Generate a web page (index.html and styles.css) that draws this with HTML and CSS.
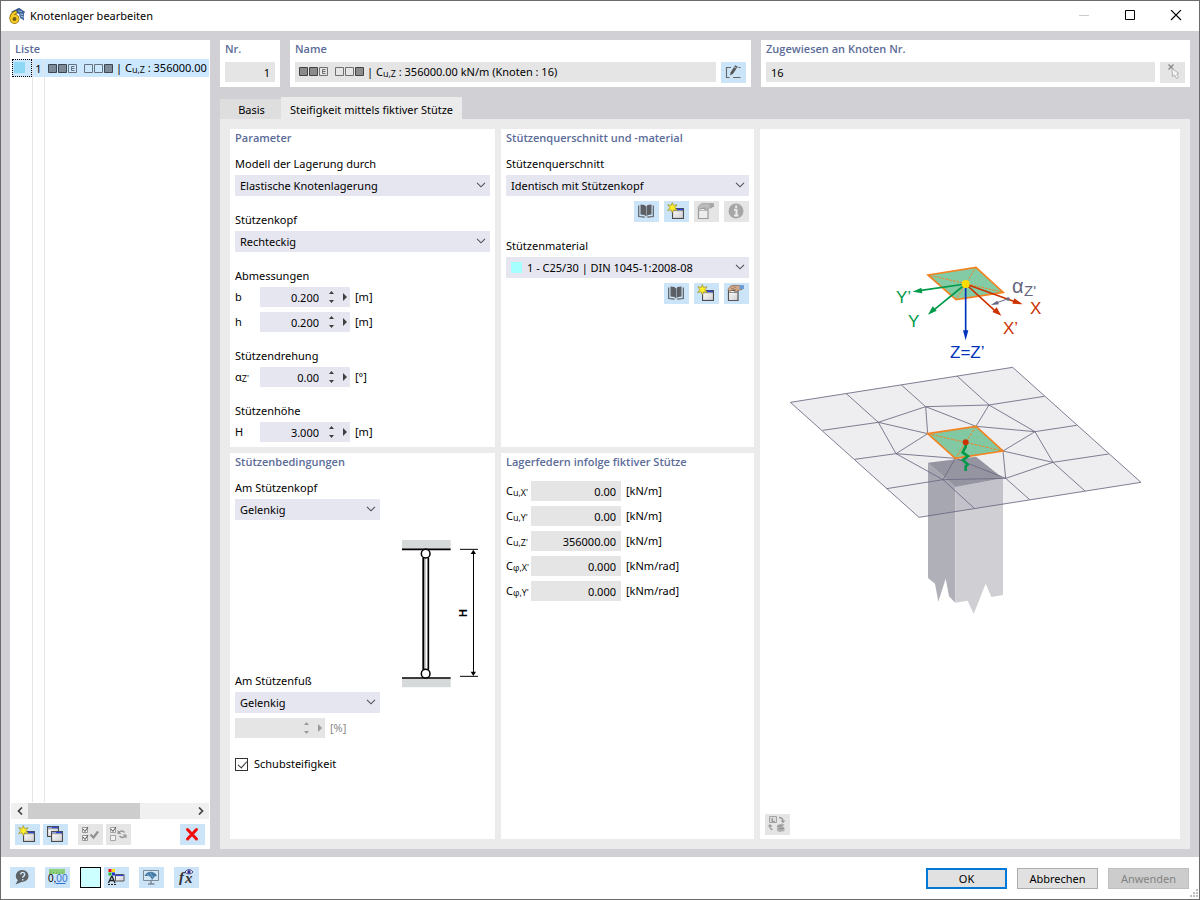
FILE: index.html
```html
<!DOCTYPE html>
<html lang="de">
<head>
<meta charset="utf-8">
<title>Knotenlager bearbeiten</title>
<link rel="stylesheet" href="styles.css">
</head>
<body>
<svg class="defs" aria-hidden="true">
  <defs>
    <linearGradient id="g-win" x1="0" y1="0" x2="1" y2="1"><stop offset="0" stop-color="#fff"/><stop offset="1" stop-color="#cfcfd4"/></linearGradient>
    <symbol id="i-window" viewBox="0 0 12 11">
      <rect x=".5" y=".5" width="11" height="10" fill="url(#g-win)" stroke="#4c4c4c" stroke-width="1.200"/>
      <path d="M1 1.500h4" stroke="#8aa0e8"/><path d="M5 1.500h6" stroke="#2a45e0" stroke-width="1.400"/><path d="M1 2.700h10" stroke="#666" stroke-width=".7"/>
    </symbol>
    <symbol id="i-new" viewBox="0 0 25 21">
      <use href="#i-window" x="8" y="7" width="12" height="11"/>
      <path d="M8.300 1.500l1.200 3 3.500-.8-2 3 2.200 2.800-3.500-.7-1.400 3-1.200-3-3.500.7 2.200-2.800-2-3 3.400.8z" fill="#ffef2a" stroke="#9a8c30" stroke-width=".7"/>
    </symbol>
    <symbol id="i-copy" viewBox="0 0 25 21">
      <use href="#i-window" x="4" y="2" width="12" height="11"/><use href="#i-window" x="8" y="7" width="12" height="11"/>
    </symbol>
    <symbol id="i-book" viewBox="0 0 25 21">
      <path d="M6.500 3.500l4 .6 1.500 1.400v10l-1.500-1.400-4-.5z M17.500 3.500l-4 .6L12.500 5.500v10l1.500-1.400 3.500-.5z" fill="#5c5f63"/>
      <path d="M4.700 4.500v11l6 .7M19.300 4.500v11l-6 .7" fill="none" stroke="#5c5f63" stroke-width="1.200"/>
    </symbol>
    <symbol id="i-hand" viewBox="0 0 25 21">
      <path d="M4.500 7.500h9.500v10H4.500z" fill="url(#g-win)" stroke="#555" stroke-width="1.200"/><path d="M5 9.500h8.500" stroke="#777" stroke-width=".8"/>
      <path d="M4 6.500l2-3 3-1.200 6 .2 3 1v3.200l-3 .2-3 2-1.500-.5 1-1.700-4 .6-1.500 1.200z" fill="#d4ab8c" stroke="#80624c" stroke-width=".7"/>
      <path d="M7 5l3 1M9.500 3.500l3 1.500" stroke="#80624c" stroke-width=".6"/>
      <path d="M15.500 2l4.500.3v3.700h-4.500z" fill="#6b9ad4"/>
    </symbol>
    <symbol id="i-hand-off" viewBox="0 0 25 21">
      <path d="M4.500 7.500h9.500v10H4.500z" fill="#eee" stroke="#9a9a9a" stroke-width="1.200"/><path d="M5 9.500h8.500" stroke="#aaa" stroke-width=".8"/>
      <path d="M4 6.500l2-3 3-1.200 6 .2 3 1v3.200l-3 .2-3 2-1.500-.5 1-1.700-4 .6-1.500 1.200z" fill="#bbb" stroke="#999" stroke-width=".7"/>
      <path d="M15.500 2l4.500.3v3.700h-4.500z" fill="#a6a6a6"/>
    </symbol>
    <symbol id="i-chev" viewBox="0 0 10 6"><path d="M1 .8l4 4 4-4" fill="none" stroke="#50505a" stroke-width="1.100"/></symbol>
    <symbol id="i-up" viewBox="0 0 5 3"><path d="M0 3L2.500 0 5 3z" fill="currentColor"/></symbol>
    <symbol id="i-down" viewBox="0 0 5 3"><path d="M0 0L2.500 3 5 0z" fill="currentColor"/></symbol>
    <symbol id="i-right" viewBox="0 0 4 8"><path d="M0 0l4 4-4 4z" fill="currentColor"/></symbol>
  </defs>
</svg>

<div class="window">
  <header class="titlebar">
    <svg class="app-icon" viewBox="0 0 16 16" aria-hidden="true">
      <path d="M2 4L10 0l6 4-1 1.500v7L11 10l-1-4z" fill="#4a6f9e"/><path d="M2 4l8-4 6 4-6 1z" fill="#345a8c"/><path d="M9 3l4 .5M11 6l3 .5M12 8.500l3 .5" stroke="#9dbbdc"/>
      <path d="M7.500 4C4 5 2 8 2 11" fill="none" stroke="#8a6a10" stroke-width="3.400"/><circle cx="5.500" cy="11" r="3.300" fill="#6d5a20" stroke="#8a6a10" stroke-width="3.200"/>
      <path d="M7.500 4C4 5 2.300 8 2.300 11" fill="none" stroke="#f5cb22" stroke-width="2.200"/><circle cx="5.500" cy="11" r="3.200" fill="none" stroke="#f5cb22" stroke-width="2.200"/>
    </svg>
    <h1 class="title">Knotenlager bearbeiten</h1>
    <div class="win-controls">
      <button class="win-btn" aria-label="Minimieren" disabled><svg width="12" height="12" viewBox="0 0 12 12"><path d="M1 5.500h10" stroke="#ccc"/></svg></button>
      <button class="win-btn" aria-label="Maximieren"><svg width="12" height="12" viewBox="0 0 12 12"><path d="M1.500.5h9v9h-9z" fill="none" stroke="#000"/></svg></button>
      <button class="win-btn" aria-label="Schließen"><svg width="12" height="12" viewBox="0 0 12 12"><path d="M1 0l10 10M11 0L1 10" stroke="#000" stroke-width="1.100"/></svg></button>
    </div>
  </header>

  <main class="workspace">
    <aside class="panel list-panel">
      <h2 class="heading">Liste</h2>
      <div class="list">
        <div class="list-row">
          <span class="row-color"><span class="row-swatch"></span></span>
          <span class="row-no">1</span>
          <span class="row-name">
            <svg class="dof" viewBox="0 0 65 10" aria-hidden="true"><g fill="#7d8b98" stroke="#3c4650"><path d="M.5.500h8v8h-8zM10.500.500h8v8h-8zM56.500.500h8v8h-8z"/><path fill="none" stroke="#66737f" d="M20.500.500h8v8h-8zM36.500.500h8v8h-8zM46.500.500h8v8h-8z"/><path fill="none" stroke="#66737f" d="M26.500 2.500h-3v4h3M23.500 4.500h3"/></g></svg>
            <span>| C<sub>u,Z</sub> : 356000.00 kN/m (Knoten : 16)</span>
          </span>
        </div>
        <div class="list-body"><span></span><span></span></div>
      </div>
      <div class="scrollbar">
        <button class="scroll-btn" aria-label="Nach links"><svg width="6" height="8" viewBox="0 0 6 8"><path d="M5 .5L1.500 4 5 7.500" fill="none" stroke="#444" stroke-width="1.700"/></svg></button>
        <div class="scroll-track"><div class="scroll-thumb"></div></div>
        <button class="scroll-btn" aria-label="Nach rechts"><svg width="6" height="8" viewBox="0 0 6 8"><path d="M1 .5L4.500 4 1 7.500" fill="none" stroke="#444" stroke-width="1.700"/></svg></button>
      </div>
      <div class="list-tools">
        <button class="tool" aria-label="Neu"><svg><use href="#i-new"/></svg></button>
        <button class="tool" aria-label="Kopieren"><svg><use href="#i-copy"/></svg></button>
        <button class="tool off spaced" aria-label="Alle auswählen" disabled><svg viewBox="0 0 25 21"><g fill="none" stroke="#9a9a9a"><path d="M4.500 3.500h5v5h-5zM4.500 11.500h5v5h-5z" fill="#f2f2f2"/><path d="M5 5l2 2.500L10 3M5 13l2 2.500L10 11" stroke="#555"/><path d="M12.500 10.500l3 3 4.500-6" stroke="#929292" stroke-width="2.200"/></g></svg></button>
        <button class="tool off" aria-label="Auswahl umkehren" disabled><svg viewBox="0 0 25 21"><g fill="none" stroke="#a5a5a5"><path d="M4.500 3.500h5v5h-5zM4.500 11.500h5v5h-5z" fill="#f2f2f2"/><path d="M5 5l2 2.500L10 3" stroke="#555"/><path d="M12.500 9c1.500-2.500 4.500-2.500 6-.5M19.500 11.500c-1.500 2.500-4.500 2.500-6 .5" stroke="#999" stroke-width="1.500"/></g><path d="M11.500 6v4h4zM20.500 14.500v-4h-4z" fill="#999"/></svg></button>
        <button class="tool push" aria-label="Löschen"><svg viewBox="0 0 25 21"><path d="M7.500 5.500l9 9.500M16.500 5.500L7.500 15" stroke="#f20d0d" stroke-width="3" stroke-linecap="round"/></svg></button>
      </div>
    </aside>

    <div class="content">
      <div class="top-row">
        <section class="panel top-panel">
          <h2 class="heading"><label for="nr">Nr.</label></h2>
          <input class="field right" id="nr" value="1" readonly>
        </section>
        <section class="panel top-panel">
          <h2 class="heading">Name</h2>
          <div class="field-row">
            <div class="field name-field">
              <svg class="dof" viewBox="0 0 65 10" aria-hidden="true"><g fill="#8b8b8b" stroke="#444"><path d="M.5.500h8v8h-8zM10.500.500h8v8h-8zM56.500.500h8v8h-8z"/><path fill="none" stroke="#707070" d="M20.500.500h8v8h-8zM36.500.500h8v8h-8zM46.500.500h8v8h-8z"/><path fill="none" stroke="#707070" d="M26.500 2.500h-3v4h3M23.500 4.500h3"/></g></svg>
              <span>| C<sub>u,Z</sub> : 356000.00 kN/m (Knoten : 16)</span>
            </div>
            <button class="tool" aria-label="Name bearbeiten"><svg viewBox="0 0 25 21"><path d="M10 5.500H5.500v10h3M17.500 5.500h2M12 15.500h7.500" fill="none" stroke="#666" stroke-width="1.100"/><path d="M9 13.500l.7-3.300 4.500-7 2.500 1.600-4.500 6.700z" fill="#555"/><path d="M13 4.800l2.700 1.700" stroke="#cce4f7" stroke-width=".8"/></svg></button>
          </div>
        </section>
        <section class="panel top-panel">
          <h2 class="heading"><label for="nodes">Zugewiesen an Knoten Nr.</label></h2>
          <div class="field-row">
            <input class="field" id="nodes" value="16" readonly>
            <button class="tool off" aria-label="Knoten wählen" disabled><svg viewBox="0 0 25 21"><path d="M8.500 2.500l5 5M13.500 2.500l-5 5" stroke="#888" stroke-width="1.300"/><path d="M12 6.500l.5 8 2-1.500 2 3.500 2-1-1.700-3.300 2.200-.7z" fill="#f4f4f4" stroke="#aaa" stroke-width=".9"/></svg></button>
          </div>
        </section>
      </div>

      <nav class="tabs">
        <button class="tab">Basis</button>
        <button class="tab active">Steifigkeit mittels fiktiver Stütze</button>
      </nav>

      <div class="page">
        <section class="panel">
          <h2 class="heading">Parameter</h2>
          <div class="stack">
            <div class="group">
              <label for="model">Modell der Lagerung durch</label>
              <div class="select"><select id="model"><option>Elastische Knotenlagerung</option></select><svg><use href="#i-chev"/></svg></div>
            </div>
            <div class="group">
              <label for="head">Stützenkopf</label>
              <div class="select"><select id="head"><option>Rechteckig</option></select><svg><use href="#i-chev"/></svg></div>
            </div>
            <div class="group">
              <span class="caption">Abmessungen</span>
              <div class="rows">
                <div class="value-row"><label for="b">b</label><div class="spin"><input id="b" value="0.200"><span class="step"><button aria-label="b erhöhen"><svg><use href="#i-up"/></svg></button><button aria-label="b verringern"><svg><use href="#i-down"/></svg></button></span><button class="more" aria-label="b Optionen"><svg><use href="#i-right"/></svg></button></div><span>[m]</span></div>
                <div class="value-row"><label for="h">h</label><div class="spin"><input id="h" value="0.200"><span class="step"><button aria-label="h erhöhen"><svg><use href="#i-up"/></svg></button><button aria-label="h verringern"><svg><use href="#i-down"/></svg></button></span><button class="more" aria-label="h Optionen"><svg><use href="#i-right"/></svg></button></div><span>[m]</span></div>
              </div>
            </div>
            <div class="group">
              <span class="caption">Stützendrehung</span>
              <div class="value-row"><label for="az">α<sub>Z'</sub></label><div class="spin"><input id="az" value="0.00"><span class="step"><button aria-label="Winkel erhöhen"><svg><use href="#i-up"/></svg></button><button aria-label="Winkel verringern"><svg><use href="#i-down"/></svg></button></span><button class="more" aria-label="Winkel Optionen"><svg><use href="#i-right"/></svg></button></div><span>[°]</span></div>
            </div>
            <div class="group">
              <span class="caption">Stützenhöhe</span>
              <div class="value-row"><label for="hh">H</label><div class="spin"><input id="hh" value="3.000"><span class="step"><button aria-label="H erhöhen"><svg><use href="#i-up"/></svg></button><button aria-label="H verringern"><svg><use href="#i-down"/></svg></button></span><button class="more" aria-label="H Optionen"><svg><use href="#i-right"/></svg></button></div><span>[m]</span></div>
            </div>
          </div>
        </section>

        <section class="panel">
          <h2 class="heading">Stützenquerschnitt und -material</h2>
          <div class="stack">
            <div class="group">
              <label for="section">Stützenquerschnitt</label>
              <div class="select"><select id="section"><option>Identisch mit Stützenkopf</option></select><svg><use href="#i-chev"/></svg></div>
              <div class="tool-row">
                <button class="tool" aria-label="Bibliothek"><svg><use href="#i-book"/></svg></button>
                <button class="tool" aria-label="Neuer Querschnitt"><svg><use href="#i-new"/></svg></button>
                <button class="tool off" aria-label="Querschnitt bearbeiten" disabled><svg><use href="#i-hand-off"/></svg></button>
                <button class="tool off" aria-label="Info" disabled><svg viewBox="0 0 25 21"><circle cx="12" cy="10" r="7.500" fill="#a6a6a6"/><path d="M12.200 4.500v2.400M10 8.800h2.500v5.500M10 14.500h4.500" fill="none" stroke="#e9e9e9" stroke-width="2"/></svg></button>
              </div>
            </div>
            <div class="group">
              <label for="material">Stützenmaterial</label>
              <div class="select with-swatch"><span class="swatch"></span><select id="material"><option>1 - C25/30 | DIN 1045-1:2008-08</option></select><svg><use href="#i-chev"/></svg></div>
              <div class="tool-row">
                <button class="tool" aria-label="Materialbibliothek"><svg><use href="#i-book"/></svg></button>
                <button class="tool" aria-label="Neues Material"><svg><use href="#i-new"/></svg></button>
                <button class="tool" aria-label="Material bearbeiten"><svg><use href="#i-hand"/></svg></button>
              </div>
            </div>
          </div>
        </section>

        <section class="panel picture">
          <svg class="scene" viewBox="760 129 420 685" role="img" aria-label="Fiktive Stütze mit Achsensystem">
            <g transform="translate(880 255) scale(.33333)" fill="none" stroke-width="5">
              <path d="M144 60L288 37l82 75-142 22z" fill="#82cba5" stroke="#f58220" stroke-width="5"/>
              <path d="M144 60l226 52M288 37l-60 97" stroke="#f58220" stroke-width="3" stroke-dasharray="7 4"/>
              <path d="M257 87L118 107M257 87L160 166" stroke="#009a49"/>
              <path d="M98 110l26-12 3 17zM144 179l14-25 12 13z" fill="#009a49"/>
              <path d="M257 87v145" stroke="#0033bb"/><path d="M257 256l-8-30h16z" fill="#0033bb"/>
              <path d="M257 87l150 54M257 87l90 82" stroke="#cc3300"/>
              <path d="M428 148l-31-2 6-16zM364 182l-27-11 13-14z" fill="#cc3300"/>
              <path d="M388 130l-40 14" stroke="#666680" stroke-width="3"/><path d="M332 150l20-13 5 11z" fill="#666680"/><circle cx="384" cy="132" r="5" fill="#666680"/>
              <circle cx="257" cy="87" r="12" fill="#ffdc00"/>
            </g>
            <g class="axis">
              <text x="896" y="303" fill="#009a49">Y’</text><text x="908" y="327" fill="#009a49">Y</text>
              <text x="950" y="358" fill="#0033bb">Z=Z’</text>
              <text x="1003" y="334" fill="#cc3300">X’</text><text x="1030" y="314" fill="#cc3300">X</text>
              <text x="1012" y="293" fill="#666680" class="alpha">α</text><text x="1024" y="296" fill="#666680" class="index">Z'</text>
            </g>
            <g transform="translate(780 355) scale(.33333)" fill="none">
              <path d="M444 323v346l21 17 10 54 22-69 10 53 19 19V396z" fill="#b0b0b9"/>
              <path d="M526 396l143-26v350l-35 6-17-40-36 91-18-40-37 6z" fill="#d0cfd4"/>
              <path d="M444 323l144-18 81 65-143 26z" fill="#9c9ca8"/>
              <path d="M31 142L698 37l385 345-666 105z" fill="#5a5a78" fill-opacity=".1"/>
              <path d="M31 142L698 37l385 345-666 105zM198 115l97 87M364 90l73 65M531 63l96 87M793 124l-166 26M890 211l-125 19M986 297l-167 25M915 408l-96-86M749 434l-72-64M583 460l-94-86M320 401l169-27M224 313l124-17M128 226l167-24M295 202l142-47 190-5 138 80 54 92-142 48-188 4-141-78zM443 236l-148-34M443 236l-6-81 151 59 39-64M765 230l-177-16M765 230l-96 58 150 34M669 288l8 82-151-60-37 64M348 296l178 14M348 296l95-60" stroke="#6c6a82" stroke-width="2.600"/>
              <path d="M443 236l145-22 81 74-143 22z" fill="#82c8a2" stroke="#f58220" stroke-width="5"/>
              <path d="M443 236l226 52M588 214l-62 96" stroke="#f58220" stroke-width="3" stroke-dasharray="8 4"/>
              <path d="M557 265v10l-9 17 16 12-15 11 14 14-6 5v14" stroke="#009a49" stroke-width="8"/>
              <circle cx="557" cy="262" r="9" fill="#cc3300"/>
            </g>
          </svg>
          <button class="tool off" aria-label="Darstellung wechseln" disabled><svg viewBox="0 0 25 21"><path d="M4.500 2.500h7v6h-7z" fill="#ddd" stroke="#a4a4a4"/><path d="M6.500 4h1.500v3H10v1H6.500z" fill="#999"/><path d="M14 3.500c3 0 4 1.500 4 4M7.500 15.500c-2 0-2.500-1-2.500-3.500" fill="none" stroke="#999" stroke-width="1.300"/><path d="M15.500 6.500h5L18 9zM2.500 12.500h5L5 10z" fill="#999"/><path d="M12 11l5-1.500 2.500 1-2 2.500 2 .5v3.500l-5 1L12 17z" fill="#b0b0b0"/><path d="M13 12.500l4-1M14 15l5-1" stroke="#8c8c8c"/></svg></button>
        </section>

        <section class="panel">
          <h2 class="heading">Stützenbedingungen</h2>
          <div class="conditions">
            <div class="cond-controls">
              <div class="group">
                <label for="top">Am Stützenkopf</label>
                <div class="select"><select id="top"><option>Gelenkig</option></select><svg><use href="#i-chev"/></svg></div>
              </div>
              <div class="group">
                <label for="foot">Am Stützenfuß</label>
                <div class="select"><select id="foot"><option>Gelenkig</option></select><svg><use href="#i-chev"/></svg></div>
                <div class="percent-row"><div class="spin disabled"><input aria-label="Einspannung" disabled><span class="step"><button aria-label="erhöhen" disabled><svg><use href="#i-up"/></svg></button><button aria-label="verringern" disabled><svg><use href="#i-down"/></svg></button></span><button class="more" aria-label="Optionen" disabled><svg><use href="#i-right"/></svg></button></div><span>[%]</span></div>
              </div>
            </div>
            <svg class="column" viewBox="402 540 78 148" role="img" aria-label="Gelenkige Stütze der Höhe H">
              <g transform="translate(220 445) scale(.33333)" stroke="#000" fill="none">
                <path d="M546 285h146v28H546zM546 700h146v27H546z" fill="#d6d9d9" stroke="none"/>
                <path d="M546 313h146M546 699h146" stroke-width="5"/>
                <path d="M610 338v336" stroke-width="6"/><path d="M625 338v336" stroke-width="5"/><path d="M615 338v336" stroke="#999" stroke-width="3"/>
                <circle cx="617" cy="326" r="13" fill="#fff" stroke-width="4.500"/><circle cx="617" cy="686" r="13" fill="#fff" stroke-width="4.500"/>
                <path d="M720 313h54M720 694h54M760.500 320v368" stroke-width="3"/>
                <path d="M760 314l8 13h-16zM760 693l8-13h-16z" fill="#000" stroke="none"/>
              </g>
              <text class="h-mark" text-anchor="middle" transform="translate(467 613) rotate(-90)">H</text>
            </svg>
          </div>
          <label class="check"><input type="checkbox" checked><span>Schubsteifigkeit</span></label>
        </section>

        <section class="panel">
          <h2 class="heading">Lagerfedern infolge fiktiver Stütze</h2>
          <div class="rows springs">
            <div class="value-row"><label for="cux">C<sub>u,X'</sub></label><input class="field right" id="cux" value="0.00" readonly><span>[kN/m]</span></div>
            <div class="value-row"><label for="cuy">C<sub>u,Y'</sub></label><input class="field right" id="cuy" value="0.00" readonly><span>[kN/m]</span></div>
            <div class="value-row"><label for="cuz">C<sub>u,Z'</sub></label><input class="field right" id="cuz" value="356000.00" readonly><span>[kN/m]</span></div>
            <div class="value-row"><label for="cpx">C<sub>φ,X'</sub></label><input class="field right" id="cpx" value="0.000" readonly><span>[kNm/rad]</span></div>
            <div class="value-row"><label for="cpy">C<sub>φ,Y'</sub></label><input class="field right" id="cpy" value="0.000" readonly><span>[kNm/rad]</span></div>
          </div>
        </section>
      </div>
    </div>
  </main>

  <footer class="footer">
    <div class="footer-tools">
      <button class="tool" aria-label="Hilfe"><svg viewBox="0 0 25 21"><path d="M12.500 3a6.500 6 0 11-1 12L5.500 17.500l2.300-4.200A6.300 6 0 0112.500 3z" fill="#5d6266"/><path d="M10.700 7.500c0-3 4-2.600 4 0 0 1.700-2 1.500-2 3.200M12.700 12v1.500" fill="none" stroke="#cce4f7" stroke-width="1.400"/></svg></button>
      <button class="tool" aria-label="Einheiten und Dezimalstellen"><svg viewBox="0 0 25 21"><path d="M4 2h16v5H4z" fill="#8fd07c"/><path d="M5.500 7V4.500M8.500 7V5M11.500 7V4.500M14.500 7V5M17.500 7V4.500" stroke="#6db35c" stroke-width=".8"/><text x="3" y="15" class="digits">0,<tspan fill="#2f6fd0">00</tspan></text><path d="M11 16.500h9.500" stroke="#2f6fd0"/></svg></button>
      <button class="color-btn" aria-label="Farbe"></button>
      <button class="tool" aria-label="Anzeigeeigenschaften"><svg viewBox="0 0 25 21"><path d="M4.500 2h3v3h-3z" fill="#e11"/><path d="M8 2h3v3H8z" fill="#fd0"/><path d="M4.500 5.500h3v3h-3z" fill="#2b2"/><path d="M8 5.500h3v3H8z" fill="#23c"/><path d="M4.500 16L7.500 9.500h.6L11 16M5.500 13.500h4.500" fill="none" stroke="#222" stroke-width="1.300"/><path d="M4 17.500h8" stroke="#222" stroke-dasharray="2 1"/><path d="M11.500 7.500h8.500v6.500h-8.500z" fill="url(#g-win)" stroke="#555"/><path d="M12 8.500h7.500" stroke="#2a45e0" stroke-width="1.200"/></svg></button>
      <button class="tool gap" aria-label="Ansicht"><svg viewBox="0 0 25 21"><path d="M4.500 3.500h15v10h-15z" fill="#d3e6f5" stroke="#7d8b98"/><path d="M12 14v3M9 17h6.500" stroke="#7d8b98" stroke-width="1.500"/><path d="M5.500 9c2-5 9-6 12.500-.5l-2.500 1.200L13 13l-2-4z" fill="#467ba8"/><path d="M8 7l5 5M11 5.500l3 5" stroke="#8db8d8" stroke-width=".8"/></svg></button>
      <button class="tool gap" aria-label="Formeln"><svg viewBox="0 0 25 21"><text x="5" y="15" class="fx">f</text><text x="11" y="16" class="fx">x</text><path d="M11 5c2-3 6-3 8 0-2 2.500-6 2.500-8 0z" fill="#fff" stroke="#2b2b70" stroke-width=".9"/><circle cx="15" cy="4.900" r="1.700" fill="#2b2b90"/></svg></button>
    </div>
    <div class="actions">
      <button class="action primary">OK</button>
      <button class="action">Abbrechen</button>
      <button class="action" disabled>Anwenden</button>
    </div>
    <svg class="grip" viewBox="0 0 9 9" aria-hidden="true"><path d="M7 0h2v2H7zM4 3h2v2H4zM7 3h2v2H7zM1 6h2v2H1zM4 6h2v2H4zM7 6h2v2H7z" fill="#bfbfbf"/></svg>
  </footer>
</div>
</body>
</html>
```

FILE: styles.css
```css
* { box-sizing: border-box; }
body, h1, h2 { margin: 0; }
body, button, input, select {
  font-family: "Noto Sans", "Open Sans", sans-serif;
  font-size: 11px;
  line-height: 16px;
  color: #000;
}
button, input, select { margin: 0; padding: 0; border: 0; border-radius: 0; background: none; }
svg { display: block; }
sub { font-family: "Open Sans", sans-serif; font-size: 9px; line-height: 0; vertical-align: -1px; }
.defs { position: absolute; width: 0; height: 0; }

.window { min-height: 100vh; display: flex; flex-direction: column; border: 1px solid #6b6b6b; background: #fff; }

.titlebar { height: 30px; display: flex; align-items: center; padding-left: 8px; flex: none; }
.app-icon { width: 16px; height: 16px; margin-right: 5px; }
.title { font-size: 11px; font-weight: 400; }
.win-controls { margin-left: auto; display: flex; }
.win-btn { width: 46px; height: 30px; display: flex; align-items: center; justify-content: center; }

.workspace {
  flex: 1;
  display: grid;
  grid-template-columns: 200px minmax(0, 1fr);
  gap: 10px;
  padding: 9px 9px 8px;
  background: #d1d0d5;
}
.panel { background: #fff; padding: 0 5px 5px; min-width: 0; }
.heading { font-family: "Open Sans", sans-serif; font-size: 11px; line-height: 18px; font-weight: 600; color: #5b6c99; white-space: nowrap; }

/* list */
.list-panel { display: flex; flex-direction: column; padding: 0 0 4px; }
.list-panel .heading { padding-left: 5px; margin-bottom: 1px; }
.list { flex: 1; display: flex; flex-direction: column; margin: 0 1px 1px 2px; }
.list-row { display: grid; grid-template-columns: 20px 12px minmax(0, 1fr); height: 18px; line-height: 20px; background: #cce8ff; align-items: center; }
.row-color { height: 18px; border: 1px dotted #000; padding: 2px 1px; }
.row-swatch { display: block; width: 11px; height: 11px; background: #8fd8f5; }
.row-no { height: 18px; padding-left: 1px; text-align: center; border-left: 1px solid #e5e5e5; border-right: 1px solid #e5e5e5; }
.row-name { display: flex; align-items: center; gap: 3px; height: 18px; padding-left: 4px; overflow: hidden; white-space: nowrap; }
.dof { flex: none; width: 65px; height: 10px; }
.row-name .dof { margin-top: 2px; }
.list-body { flex: 1; display: flex; padding-left: 20px; }
.list-body span { width: 12px; border-left: 1px solid #e5e5e5; }
.scrollbar { display: flex; height: 16px; margin: 0 1px 5px; background: #f0f0f0; }
.scroll-btn { width: 17px; display: flex; align-items: center; justify-content: center; }
.scroll-track { flex: 1; display: flex; }
.scroll-thumb { width: 68%; background: #cdcdcd; }
.list-tools { display: flex; gap: 3px; padding: 0 5px; }
.spaced { margin-left: 7px; }
.push { margin-left: auto; }

.tool { flex: none; width: 25px; height: 21px; background: #cce4f7; }
.tool svg { width: 25px; height: 21px; }
.tool.off { background: #e5e5e5; }

/* top */
.content { display: flex; flex-direction: column; min-width: 0; }
.top-row { display: grid; grid-template-columns: 60px minmax(0, 461fr) minmax(0, 429fr); gap: 10px; margin-bottom: 10px; }
.top-panel { padding-bottom: 4px; }
.top-panel .heading { margin-bottom: 4px; }
.field-row { display: flex; gap: 5px; }
.field { display: block; width: 100%; min-width: 0; height: 20px; padding: 0 5px; background: #e5e5e5; }
.right { text-align: right; }
.name-field { flex: 1; display: flex; align-items: center; gap: 3px; padding: 0 4px; white-space: nowrap; }

.tabs { display: flex; align-items: flex-end; height: 22px; }
.tab { width: 61px; height: 20px; padding: 1px 0 0 2px; background: #dedede; }
.tab.active { width: auto; height: 22px; padding: 3px 9px 0; background: #ebebeb; }

.page {
  flex: 1;
  display: grid;
  grid-template-columns: minmax(0, 265fr) minmax(0, 253fr) minmax(0, 420fr);
  grid-template-rows: auto 1fr;
  gap: 6px;
  padding: 10px;
  background: #ebebeb;
}
.picture { grid-column: 3; grid-row: 1 / 3; display: flex; flex-direction: column; padding: 0 0 4px; }
.picture .tool { margin-left: 5px; }
.scene { flex: 1; width: 100%; height: 0; min-height: 400px; }
.axis text { font-family: "Liberation Sans", sans-serif; font-size: 17px; }
.axis .alpha { font-size: 20px; }
.axis .index { font-size: 15px; }

.stack { display: flex; flex-direction: column; gap: 16px; padding-top: 9px; }
.group { display: flex; flex-direction: column; }
.group > label, .caption { margin-bottom: 3px; }
.select { position: relative; height: 21px; background: #e6e6f1; }
.select select { appearance: none; width: 100%; height: 21px; padding: 0 20px 0 5px; }
.select svg { position: absolute; right: 4px; top: 7px; width: 10px; height: 6px; pointer-events: none; }
.with-swatch select { padding-left: 21px; }
.swatch { position: absolute; left: 5px; top: 5px; width: 11px; height: 11px; background: #a6ffff; }
.tool-row { display: flex; justify-content: flex-end; gap: 5px; margin-top: 5px; }

.rows { display: flex; flex-direction: column; gap: 5px; }
.value-row { display: grid; grid-template-columns: 25px 90px auto; align-items: center; height: 20px; }
.value-row > span { padding-left: 5px; }
.value-row label { white-space: nowrap; }
.springs { padding-top: 10px; }

.spin { display: flex; align-items: center; width: 90px; height: 20px; background: #e6e6f1; color: #404040; }
.spin input { flex: 1; min-width: 0; height: 20px; text-align: right; }
.spin button { color: inherit; display: flex; justify-content: center; }
.step { display: flex; flex-direction: column; gap: 6px; width: 24px; align-items: center; }
.step svg { width: 5px; height: 3px; }
.spin .more { width: 7px; align-items: center; justify-content: flex-start; }
.more svg { width: 4px; height: 8px; }
.disabled { background: #e5e5e5; color: #9a9a9a; }

.conditions { display: grid; grid-template-columns: 145px 78px; column-gap: 22px; padding-top: 9px; }
.cond-controls { display: flex; flex-direction: column; gap: 153px; }
.column { width: 78px; height: 148px; margin-top: 60px; }
.h-mark { font-family: "Liberation Sans", sans-serif; font-size: 11px; font-weight: 700; }
.percent-row { display: flex; align-items: center; gap: 5px; margin-top: 5px; color: #8a8a8a; }
.check { display: inline-flex; align-items: center; gap: 6px; margin-top: 18px; }
.check input { appearance: none; position: relative; width: 13px; height: 13px; border: 1px solid #333; background: #fff; }
.check input:checked::after { content: ""; position: absolute; left: 4px; top: 0; width: 4px; height: 8px; border: solid #333; border-width: 0 1px 1px 0; transform: rotate(42deg); }

/* footer */
.footer { position: relative; flex: none; display: flex; justify-content: space-between; padding: 10px 10px 10px 9px; height: 42px; }
.footer-tools { display: flex; gap: 10px; }
.color-btn { width: 21px; height: 21px; border: 1px solid #000; background: #ccffff; margin-right: -7px; }
.digits { font-family: "Liberation Sans", sans-serif; font-size: 10px; }
.fx { font-family: "Liberation Serif", serif; font-size: 15px; font-style: italic; font-weight: 700; fill: #333; }
.actions { display: flex; gap: 10px; padding-top: 1px; }
.action { width: 81px; height: 21px; border: 1px solid #adadad; background: #e1e1e1; }
.primary { border: 2px solid #0078d7; }
.action:disabled { border-color: #bfbfbf; background: #ccc; color: #838383; }
.grip { position: absolute; right: 1px; bottom: 1px; width: 9px; height: 9px; }
```
